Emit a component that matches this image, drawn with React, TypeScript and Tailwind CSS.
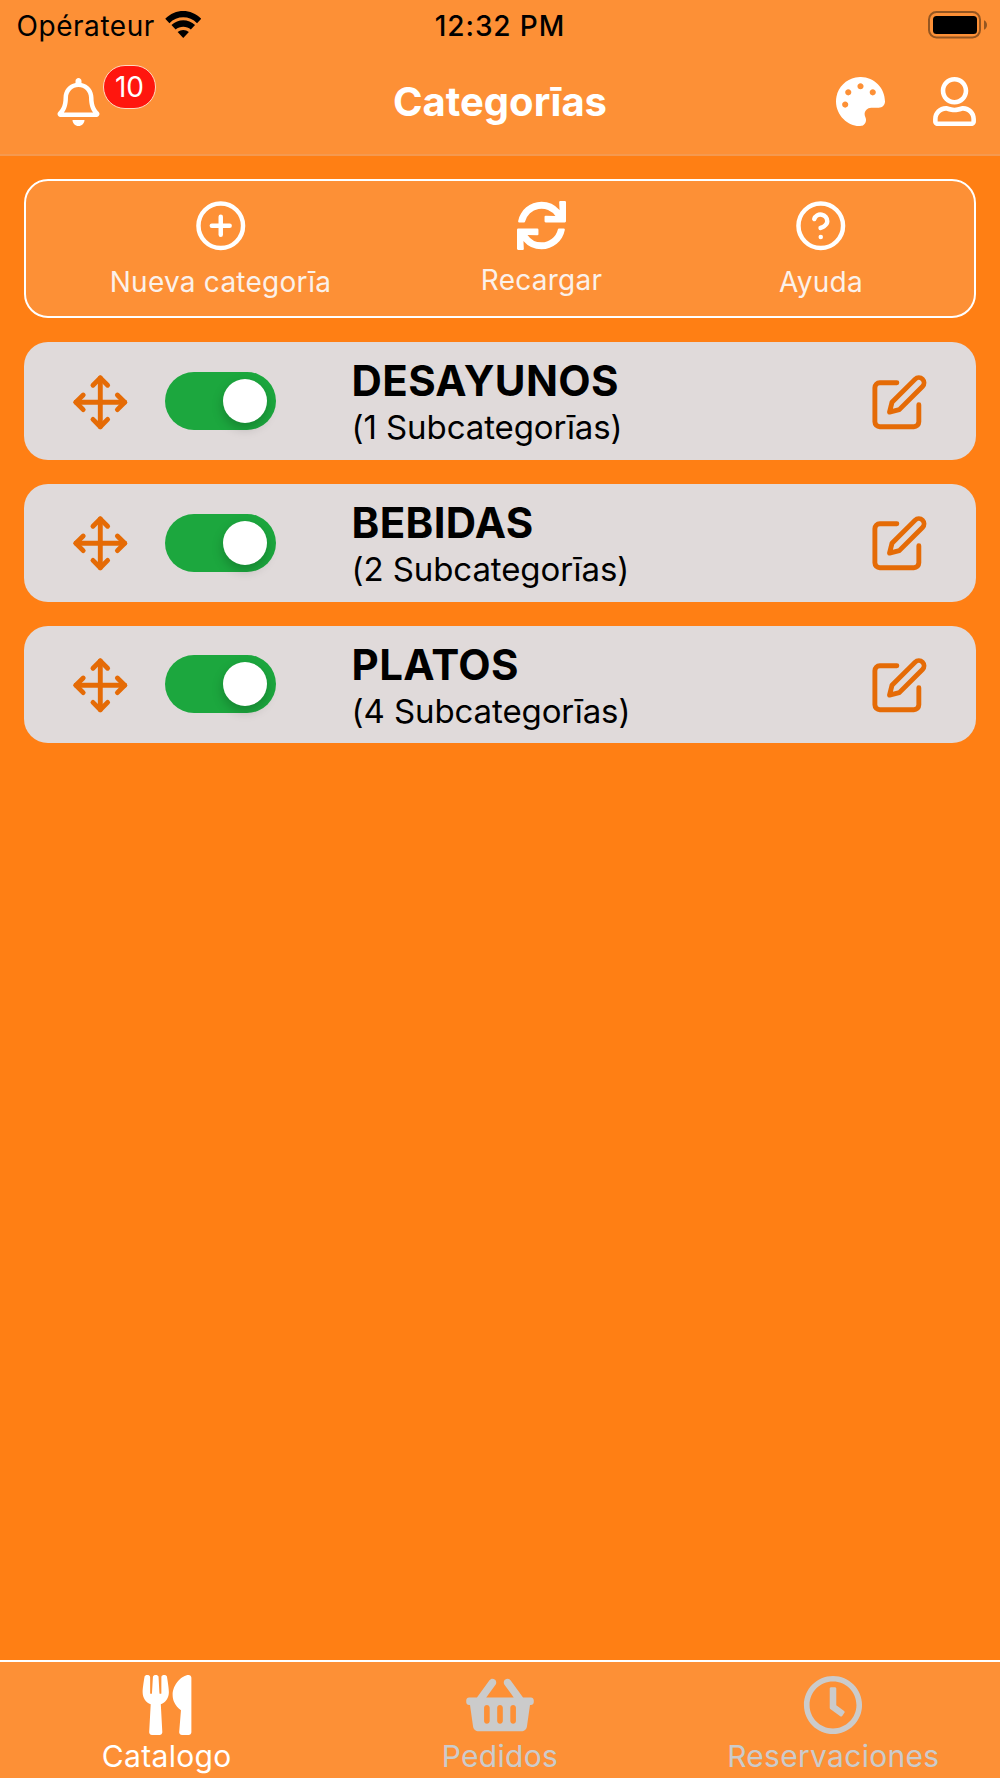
import { FaPalette, FaRegBell, FaRegClock, FaRegUser, FaShoppingBasket, FaSync, FaUtensils } from "react-icons/fa";
import { FiEdit, FiHelpCircle, FiMove, FiPlusCircle } from "react-icons/fi";

const StatusBar = () => {
  return (
    <div className="grid h-12 grid-cols-3 items-center text-[28px]/[48px] text-black">
      <div className="flex items-center pl-[16.5px] pt-0.5">
        <span className="tracking-[0.55px]">Opérateur</span>
        <svg viewBox="0 0 36 27" className="ml-[10px] -mt-[3px] h-[27px] w-[36.5px]">
          <path
            d="M0 7.8C10 -2.6 26 -2.6 36 7.8L31.8 12.2C24.3 4.4 11.7 4.4 4.2 12.2Z"
            fill="currentColor"
          />
          <path
            d="M6.2 14C12.9 7.5 23.1 7.5 29.8 14L25.6 18.4C21.4 14.7 14.6 14.7 10.4 18.4Z"
            fill="currentColor"
          />
          <path
            d="M12.4 21C15.6 18.2 20.4 18.2 23.6 21L18 27Z"
            fill="currentColor"
          />
        </svg>
      </div>
      <p className="pt-0.5 text-center font-[550] tracking-[0.9px]">
        12:32 PM
      </p>
      <div className="flex justify-end pr-[13px]">
        <svg viewBox="0 0 59 28" className="h-7 w-[59px]">
          <rect
            x="1"
            y="1"
            width="51"
            height="25.5"
            rx="7.5"
            fill="none"
            stroke="#955621"
            strokeWidth="2"
          />
          <rect x="5" y="5" width="44" height="18" rx="3.5" fill="#000" />
          <path d="M56 9.2C60 11 60 17 56 18.8Z" fill="#955621" />
        </svg>
      </div>
    </div>
  );
};

const Header = () => {
  return (
    <header className="h-[156px] border-b-2 border-[#f5994f] bg-[#fd9036]">
      <StatusBar />
      <div className="grid h-[107px] grid-cols-3 items-center text-white">
        <div className="relative pl-[57px] pt-px">
          <FaRegBell className="h-12 w-[43px]" />
          <span className="absolute left-[103px] -top-3 flex h-11 w-[53px] items-center justify-center rounded-full border border-[#ffd9c0] bg-[#ff160e] text-[28px]/[42px]">
            10
          </span>
        </div>
        <h1 className="text-center text-[40px]/[48px] font-bold">Categorīas</h1>
        <div className="flex justify-end gap-12 pr-6">
          <FaPalette className="size-[49px]" />
          <FaRegUser className="h-[49px] w-[43px]" />
        </div>
      </div>
    </header>
  );
};

const Toolbar = () => {
  return (
    <div className="flex h-[139px] rounded-3xl border-2 border-white bg-[#fd9036] pt-[17.5px]">
      {actions.map(({ title, icon, className }) => (
        <button
          key={title}
          className={`flex flex-col items-center whitespace-nowrap text-white ${className}`}
        >
          {icon}
          <span className="mt-3 text-[28px]/[36px] tracking-[0.25px] text-[#fbf1ea]">
            {title}
          </span>
        </button>
      ))}
    </div>
  );
};

const CategoryCard = ({ name, count }: { name: string; count: number }) => {
  return (
    <li className="flex h-[117.8px] items-center rounded-3xl bg-[#e0dada] pr-[47px] pl-[47px] text-[58.6px]">
      <FiMove className="mt-0.5 shrink-0 text-[#e56b06]" />
      <div className="ml-[35px] flex h-[58px] w-[111px] items-center justify-end rounded-full bg-[#1ca73e] pr-[9px]">
        <div className="size-11 rounded-full bg-white shadow-[0_5px_12px_rgba(0,0,0,0.22)]" />
      </div>
      <div className="ml-[76px] flex-1 pt-[5px] text-black">
        <p className="text-[42px]/[48px] font-bold tracking-[0.35px]">{name}</p>
        <p className="text-[33px]/[44px] tracking-[-0.1px]">
          ({count} Subcategorīas)
        </p>
      </div>
      <FiEdit className="mt-0.5 shrink-0 text-[#e56b06]" />
    </li>
  );
};

const TabBar = () => {
  return (
    <nav className="grid h-[118px] grid-cols-3 border-t-2 border-white bg-[#fd9036] pt-[13px]">
      {tabs.map(({ title, icon, color }) => (
        <a
          key={title}
          href="#"
          className={`flex flex-col items-center text-[60px] ${color}`}
        >
          {icon}
          <span className="mt-[3px] text-[30px]/[36px] tracking-[0.3px]">
            {title}
          </span>
        </a>
      ))}
    </nav>
  );
};

const App = () => {
  return (
    <div className="flex h-[1778px] w-[1000px] flex-col overflow-hidden bg-[#ff7f14] font-[Inter,sans-serif]">
      <Header />
      <main className="flex-1 px-6 pt-[23px]">
        <Toolbar />
        <ul className="mt-6 space-y-6">
          {categories.map(({ name, count }) => (
            <CategoryCard key={name} name={name} count={count} />
          ))}
        </ul>
      </main>
      <TabBar />
    </div>
  );
};

const actions = [
  {
    title: "Nueva categorīa",
    icon: <FiPlusCircle className="size-[53.5px]" />,
    className: "ml-[84px] w-[221px]",
  },
  {
    title: "Recargar",
    icon: <FaSync className="mt-0.5 size-[49px]" />,
    className: "ml-[150px] w-[121px]",
  },
  {
    title: "Ayuda",
    icon: <FiHelpCircle className="size-[53.5px]" />,
    className: "ml-[177px] w-[84px]",
  },
];

const categories = [
  { name: "DESAYUNOS", count: 1 },
  { name: "BEBIDAS", count: 2 },
  { name: "PLATOS", count: 4 },
];

const tabs = [
  { title: "Catalogo", icon: <FaUtensils />, color: "text-white" },
  {
    title: "Pedidos",
    icon: <FaShoppingBasket className="h-[60px] w-[68px]" />,
    color: "text-[#cbcbcb]",
  },
  { title: "Reservaciones", icon: <FaRegClock />, color: "text-[#cbcbcb]" },
];

export default App;
